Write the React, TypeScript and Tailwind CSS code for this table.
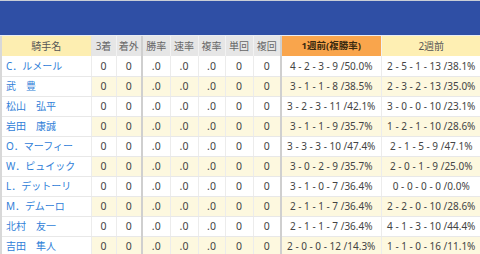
import React from "react";

type Row = { name: string; w1: string; w2: string };

const rows: Row[] = [
  { name: "C．ルメール", w1: "4 - 2 - 3 - 9 /50.0%", w2: "2 - 5 - 1 - 13 /38.1%" },
  { name: "武　豊", w1: "3 - 1 - 1 - 8 /38.5%", w2: "2 - 3 - 2 - 13 /35.0%" },
  { name: "松山　弘平", w1: "3 - 2 - 3 - 11 /42.1%", w2: "3 - 0 - 0 - 10 /23.1%" },
  { name: "岩田　康誠", w1: "3 - 1 - 1 - 9 /35.7%", w2: "1 - 2 - 1 - 10 /28.6%" },
  { name: "O．マーフィー", w1: "3 - 3 - 3 - 10 /47.4%", w2: "2 - 1 - 5 - 9 /47.1%" },
  { name: "W．ピュイック", w1: "3 - 0 - 2 - 9 /35.7%", w2: "2 - 0 - 1 - 9 /25.0%" },
  { name: "L．デットーリ", w1: "3 - 1 - 0 - 7 /36.4%", w2: "0 - 0 - 0 - 0 /0.0%" },
  { name: "M．デムーロ", w1: "2 - 1 - 1 - 7 /36.4%", w2: "2 - 2 - 0 - 10 /28.6%" },
  { name: "北村　友一", w1: "2 - 1 - 1 - 7 /36.4%", w2: "4 - 1 - 3 - 10 /44.4%" },
  { name: "吉田　隼人", w1: "2 - 0 - 0 - 12 /14.3%", w2: "1 - 1 - 0 - 16 /11.1%" },
];

const stats = ["0", "0", ".0", ".0", ".0", "0", "0"];
const heads = ["3着", "着外", "勝率", "速率", "複率", "単回", "複回"];

export default function App() {
  return (
    <div
      className="w-[480px] h-[254px] overflow-hidden bg-white"
      style={{ fontFamily: '"Noto Sans", "Noto Sans CJK JP", sans-serif' }}
    >
      <div className="h-[36px] bg-[#2f4fa5] border-t border-[#c9cdd6] border-b border-b-[#e8ecf4]" />
      <table className="table-fixed border-collapse w-[480px] text-[10.5px] leading-none">
        <colgroup>
          <col className="w-[90px]" />
          <col className="w-[25px]" />
          <col className="w-[26px]" />
          <col className="w-[28px]" />
          <col className="w-[28px]" />
          <col className="w-[27px]" />
          <col className="w-[28px]" />
          <col className="w-[28px]" />
          <col className="w-[100px]" />
          <col className="w-[100px]" />
        </colgroup>
        <thead>
          <tr className="h-[20px]">
            <th className="bg-[#fdeeb1] font-normal text-[#555] text-[10px] border-l-2 border-l-[#d8d8d8] border-r border-r-[#e4e4e4] p-0">
              騎手名
            </th>
            {heads.map((h, i) => (
              <th
                key={h}
                className={`bg-[#e6e6e6] font-normal text-[#666] text-[10px] p-0 border-r ${
                  i === 1 || i === 6 ? "border-r-2 border-r-[#cfcfcf]" : "border-r-[#f2f2f2]"
                }`}
              >
                {h}
              </th>
            ))}
            <th className="bg-[#f9a54c] font-bold text-[#3a2a10] text-[9.5px] p-0 border-r border-r-[#f0f0f0]">
              1週前(複勝率)
            </th>
            <th className="bg-[#feefb3] font-normal text-[#555] text-[10px] p-0">2週前</th>
          </tr>
        </thead>
        <tbody>
          {rows.map((r, ri) => {
            const cream = ri % 2 === 1;
            const cellBg = cream ? "bg-[#fdf8df]" : "bg-white";
            return (
              <tr key={r.name} className="h-[20px]">
                <td className="bg-white text-[#2f80d8] text-[10px] pl-[4px] p-0 whitespace-nowrap border-l-2 border-l-[#d8d8d8] border-r border-r-[#ececec] border-b border-b-[#e8e8e8]">
                  {r.name}
                </td>
                {stats.map((s, i) => (
                  <td
                    key={i}
                    className={`${cellBg} text-center text-[#444] p-0 border-b border-b-[#e8e8e8] border-r ${
                      i === 1 || i === 6 ? "border-r-2 border-r-[#cfcfcf]" : "border-r-[#ececec]"
                    }`}
                  >
                    {s}
                  </td>
                ))}
                <td className={`${cellBg} text-center text-[#444] text-[10px] p-0 whitespace-nowrap border-b border-b-[#e8e8e8] border-r border-r-[#ececec]`}>
                  {r.w1}
                </td>
                <td className={`${cellBg} text-center text-[#444] text-[10px] p-0 whitespace-nowrap border-b border-b-[#e8e8e8]`}>
                  {r.w2}
                </td>
              </tr>
            );
          })}
        </tbody>
      </table>
    </div>
  );
}
